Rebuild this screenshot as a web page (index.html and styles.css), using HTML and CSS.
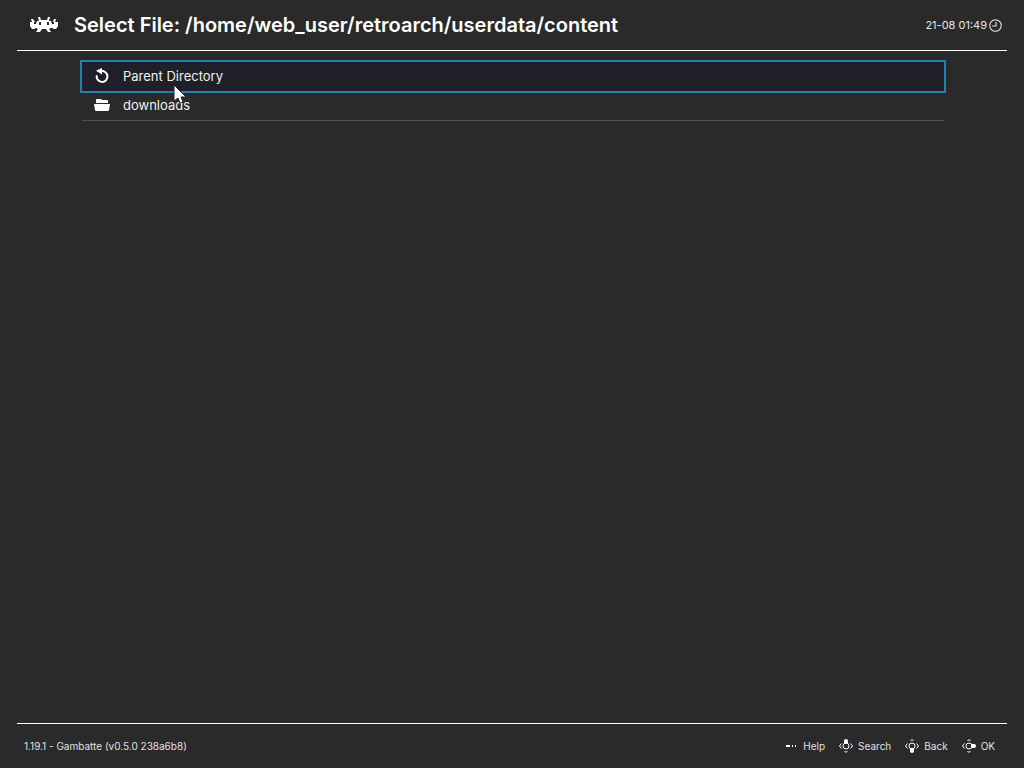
FILE: index.html
```
<!DOCTYPE html>
<html lang="en">
<head>
    <meta charset="UTF-8">
    <meta name="viewport" content="width=device-width, initial-scale=1.0">
    <title>RetroArch</title>
    <link rel="stylesheet" href="styles.css">
</head>
<body>
    <header class="header">
        <svg class="logo" viewBox="0 0 28 16" aria-hidden="true">
            <path fill-rule="evenodd" d="M8 0h2l1 3h6l1-3h2l-1 4h2l1 3h2V5h-1l1-3h2l-1 3h3v4l-2 3h-3v-1h-2l-2 1 2 3h-3l-2-3h-4l-2 3H6l2-3-2-1H5v1H2L0 9V5h2L1 2h2l2 3H4v2h2l1-3h2zM9 5v3h2V5zM17 5v3h2V5z"/>
        </svg>
        <h1 class="title">Select File: /home/web_user/retroarch/userdata/content</h1>
        <div class="clock">
            <time>21-08 01:49</time>
            <svg class="clock-icon" viewBox="0 0 12 12" aria-hidden="true">
                <circle cx="6" cy="6" r="5.3"/>
                <path d="M6.5 2.5v4H3"/>
            </svg>
        </div>
    </header>

    <main class="content">
        <ul class="file-list">
            <li>
                <button type="button" class="entry selected">
                    <svg class="entry-icon" viewBox="0 0 16 16" aria-hidden="true">
                        <path class="stroke" d="M7 3.2A5.4 5.4 0 1 1 2.8 7.2"/>
                        <path d="M2 2.8L8 0v6.4z"/>
                    </svg>
                    Parent Directory
                </button>
            </li>
            <li>
                <button type="button" class="entry">
                    <svg class="entry-icon" viewBox="0 0 16 16" aria-hidden="true">
                        <path d="M2 6V3q0-1 1-1h4l1 1h5q1 0 1 1v2z"/>
                        <path d="M0 7h16l-1 6q0 1-1 1H2q-1 0-1-1z"/>
                    </svg>
                    downloads
                </button>
            </li>
        </ul>
        <svg class="cursor" viewBox="0 0 14 20" aria-hidden="true">
            <path d="M1 1v16l4-3 2 5 3-1-2-5h5z"/>
        </svg>
    </main>

    <footer class="footer">
        <span>1.19.1 - Gambatte (v0.5.0 238a6b8)</span>
        <div class="hints">
            <button type="button" class="hint">
                <svg class="hint-icon" viewBox="0 0 14 14" aria-hidden="true">
                    <path class="fill" d="M2 6h4v2H2zM8 6h1v2H8zM11 6h1v2h-1z"/>
                </svg>
                Help
            </button>
            <button type="button" class="hint">
                <svg class="hint-icon" viewBox="0 0 14 14" aria-hidden="true">
                    <path d="M2.5 4.5L.5 7l2 2.5M11.5 4.5l2 2.5-2 2.5M5.5 12L7 13.5 8.5 12"/>
                    <circle cx="7" cy="7" r="3"/>
                    <path class="fill" d="M5 5V2q0-2 2-2t2 2v3z"/>
                </svg>
                Search
            </button>
            <button type="button" class="hint">
                <svg class="hint-icon" viewBox="0 0 14 14" aria-hidden="true">
                    <path d="M2.5 4.5L.5 7l2 2.5M11.5 4.5l2 2.5-2 2.5M5.5 2L7 .5 8.5 2"/>
                    <circle cx="7" cy="7" r="3"/>
                    <path class="fill" d="M5 9v3q0 2 2 2t2-2V9z"/>
                </svg>
                Back
            </button>
            <button type="button" class="hint">
                <svg class="hint-icon" viewBox="0 0 14 14" aria-hidden="true">
                    <path d="M2.5 4.5L.5 7l2 2.5M5.5 2L7 .5 8.5 2M5.5 12L7 13.5 8.5 12"/>
                    <circle cx="7" cy="7" r="3"/>
                    <path class="fill" d="M9 5h3q2 0 2 2t-2 2H9z"/>
                </svg>
                OK
            </button>
        </div>
    </footer>
</body>
</html>
```
FILE: styles.css
```
* {
    margin: 0;
    padding: 0;
    box-sizing: border-box;
}

body {
    font-family: Inter, sans-serif;
    background: #2a2a2a;
    color: #fff;
    min-height: 100vh;
    padding: 0 17px;
    display: flex;
    flex-direction: column;
}

button {
    font: inherit;
    color: inherit;
    background: none;
    border: none;
    cursor: default;
}

.header {
    display: flex;
    align-items: center;
    height: 51px;
    padding: 0 5px 0 13px;
    border-bottom: 1px solid #fff;
}

.logo {
    width: 28px;
    height: 16px;
    margin-right: 16px;
    fill: #fff;
}

.title {
    font-size: 20px;
    font-weight: 600;
    white-space: nowrap;
}

.clock {
    display: flex;
    align-items: center;
    gap: 2px;
    margin-left: auto;
    font-size: 11px;
    color: #e6e6e6;
}

.clock-icon {
    width: 13px;
    height: 13px;
    fill: none;
    stroke: #e6e6e6;
}

.content {
    position: relative;
    flex: 1;
    padding: 11px 63px 0 65px;
}

.file-list {
    list-style: none;
}

.entry {
    display: flex;
    align-items: center;
    gap: 13px;
    width: 100%;
    height: 30px;
    padding: 0 12px 1px;
    border-bottom: 1px solid #505050;
    font-size: 13px;
    color: #f0f0f0;
    text-align: left;
}

.entry.selected {
    height: 29px;
    background: #20202b;
    border-bottom: none;
    outline: 2px solid #2480b0;
}

.entry-icon {
    width: 16px;
    height: 16px;
    fill: #fff;
}

.entry-icon .stroke {
    fill: none;
    stroke: #fff;
    stroke-width: 2;
}

/* mouse pointer, drawn over the list */
.cursor {
    position: absolute;
    left: 156px;
    top: 33px;
    width: 14px;
    height: 20px;
    fill: #fff;
    stroke: #222;
    stroke-width: 1;
}

.footer {
    display: flex;
    align-items: center;
    justify-content: space-between;
    height: 45px;
    padding: 0 12px 1px 7px;
    border-top: 1px solid #fff;
    font-size: 10px;
    color: #e0e0e0;
}

.hints {
    display: flex;
    gap: 14px;
}

.hint {
    display: flex;
    align-items: center;
    gap: 5px;
}

.hint-icon {
    width: 14px;
    height: 14px;
    fill: none;
    stroke: #fff;
}

.hint-icon .fill {
    fill: #fff;
    stroke: none;
}
```
